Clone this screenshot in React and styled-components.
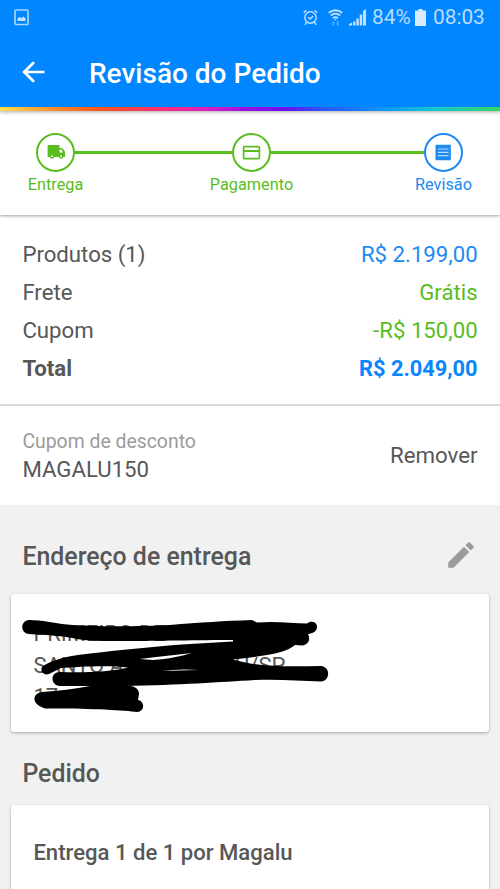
import React from "react";
import styled, { createGlobalStyle } from "styled-components";

const BLUE = "#0a85fc";
const GREEN = "#5abd1e";
const LINK = "#1d8af2";
const TEXT = "#575757";

const GlobalStyle = createGlobalStyle`
  * { box-sizing: border-box; }
  html, body { margin: 0; padding: 0; background: #f1f1f1; }
  body { font-family: Roboto, "Liberation Sans", sans-serif; color: ${TEXT}; overflow: hidden; }
`;

const Screen = styled.main`
  width: 500px;
  height: 889px;
  overflow: hidden;
  display: flex;
  flex-direction: column;
  background: #f1f1f1;
`;

const Header = styled.header`
  flex: none;
  height: 111px;
  display: flex;
  flex-direction: column;
  background: #0086ff;
  color: #fff;
  position: relative;
  z-index: 2;
  box-shadow: 0 1px 4px rgba(0, 0, 0, 0.35);
`;

const StatusBar = styled.div`
  height: 34px;
  display: flex;
  align-items: center;
  padding: 0 14px;
  color: #b9dcff;
  font-size: 20.8px;
  line-height: 34px;
`;

const StatusIcon = styled.svg`
  flex: none;
  display: block;
  width: ${(p) => p.$w}px;
  height: ${(p) => p.$h}px;
  margin-left: ${(p) => p.$gap || 0}px;
`;

const StatusText = styled.span`
  margin-left: ${(p) => p.$gap}px;
  width: ${(p) => p.$w}px;
  white-space: nowrap;
`;

const Spacer = styled.div`
  flex: 1;
`;

const TitleBar = styled.div`
  height: 73px;
  display: flex;
  align-items: center;
  padding: 6px 0 0 22px;
`;

const BackIcon = styled.svg`
  width: 23px;
  height: 22px;
  display: block;
  margin-top: -3px;
`;

const Title = styled.h1`
  margin: 0 0 0 44px;
  font-size: 28px;
  font-weight: 500;
  line-height: 32px;
`;

const Rainbow = styled.div`
  height: 4px;
  background: linear-gradient(90deg, #ffe14d 0%, #fb9130 10%, #f8541c 20%, #fb2a7c 33%, #e01fc0 41%, #9a10e0 49%, #6a10f0 57%, #2a58f8 65%, #0b9cf5 78%, #15c8cc 87%, #35d860 100%);
`;

const Stepper = styled.nav`
  flex: none;
  height: 104px;
  background: #fff;
  padding: 22px 0 0 36px;
  display: flex;
  position: relative;
  z-index: 1;
  box-shadow: 0 1px 3px rgba(0, 0, 0, 0.38);
`;

const Step = styled.div`
  width: 39px;
  flex: none;
  display: flex;
  flex-direction: column;
  align-items: center;
  color: ${(p) => (p.$current ? LINK : GREEN)};
`;

const StepCircle = styled.div`
  width: 39px;
  height: 39px;
  border: 2px solid currentColor;
  border-radius: 50%;
  display: flex;
  align-items: center;
  justify-content: center;
  svg { display: block; width: 19px; height: 19px; }
`;

const StepLabel = styled.span`
  margin-top: 3px;
  font-size: 16.3px;
  line-height: 20px;
  white-space: nowrap;
`;

const Connector = styled.div`
  width: ${(p) => p.$w}px;
  height: 3px;
  margin-top: 18px;
  background: ${GREEN};
`;

const Summary = styled.section`
  flex: none;
  height: 191px;
  padding: 19.5px 22.4px 0;
  background: #fff;
  border-bottom: 2px solid #d9d9d9;
`;

const SummaryRow = styled.div`
  height: 38.2px;
  display: flex;
  justify-content: space-between;
  align-items: center;
  font-size: 22.2px;
  font-weight: ${(p) => (p.$total ? 700 : 400)};
`;

const Amount = styled.span`
  color: ${(p) => p.$color};
  font-size: ${(p) => (p.$total ? 21.8 : 22.2)}px;
`;

const Coupon = styled.section`
  flex: none;
  height: 99px;
  padding: 0 22.4px 1px;
  display: flex;
  justify-content: space-between;
  align-items: center;
  background: #fff;
`;

const CouponInfo = styled.div`
  display: flex;
  flex-direction: column;
`;

const CouponLabel = styled.span`
  color: #9b9b9b;
  font-size: 19.4px;
  line-height: 27px;
`;

const CouponCode = styled.span`
  font-size: 22.2px;
  line-height: 28px;
`;

const RemoveButton = styled.button`
  border: 0;
  padding: 0;
  background: none;
  font: inherit;
  font-size: 22.3px;
  color: ${TEXT};
`;

const SectionHeader = styled.div`
  flex: none;
  height: ${(p) => p.$h}px;
  padding: ${(p) => p.$top}px 22px 0 22.4px;
  display: flex;
  justify-content: space-between;
`;

const SectionTitle = styled.h2`
  margin: 0;
  font-size: 24.9px;
  line-height: 30px;
  font-weight: 500;
`;

const PencilIcon = styled.svg`
  width: 34px;
  height: 34px;
  margin: -4px 0 0 0;
  fill: #9b9b9b;
`;

const Card = styled.article`
  flex: none;
  height: ${(p) => p.$h}px;
  margin: 0 11px;
  padding: 0 22.4px;
  background: #fff;
  border-radius: 3px;
  box-shadow: 0 1px 3px rgba(0, 0, 0, 0.32);
  position: relative;
`;

const Address = styled.address`
  padding-top: 24px;
  font-style: normal;
  font-size: 22px;
  line-height: 31.5px;
  color: #555;
  white-space: pre;
`;

const AddressLine = styled.div`
  display: flex;
  justify-content: space-between;
  width: ${(p) => p.$w}px;
`;

const Scribble = styled.svg`
  position: absolute;
  left: 0;
  top: 0;
  width: 478px;
  height: 138px;
  fill: #000;
`;

const DeliveryTitle = styled.h3`
  margin: 0;
  padding-top: 32.500px;
  font-size: 22.1px;
  line-height: 28px;
  font-weight: 500;
`;

export default function App() {
  return (
    <>
      <GlobalStyle />
      <Screen>
        <Header>
          <StatusBar>
            <StatusIcon $w={15} $h={17} viewBox="0 0 15 17">
              <rect x="1" y="1" width="13" height="14.5" rx="1" fill="none" stroke="#a9d5ff" strokeWidth="1.7" />
              <path d="M3.5 12V9.5l2-1.5 2 1 2-1.5 2 2V12z" fill="#c3e1ff" />
            </StatusIcon>
            <Spacer />
            <StatusIcon $w={15} $h={17} viewBox="0 0 15 17" fill="none" stroke="#c3e1ff" strokeWidth="1.4">
              <circle cx="7.5" cy="8.5" r="5.7" />
              <path d="M.7 3.8 3.5 1.2M14.3 3.8 11.5 1.2M3.5 13.2 2 16M11.5 13.2 13 16M5 8.3l2 1.8 3.2-3.2" />
            </StatusIcon>
            <StatusIcon $w={15} $h={17} $gap={10} viewBox="0 0 15 17" fill="none" stroke="#c3e1ff" strokeWidth="1.8">
              <path d="M.7 3.8Q7.5-1.3 14.3 3.8M2.8 6.5Q7.5 2.9 12.2 6.5M5 9Q7.5 7.2 10 9" />
              <path d="m6 9.8 1.5 1.6L9 9.8z" fill="#c3e1ff" stroke="none" />
              <path d="M5.3 12.5v4M9.7 12.5v4" stroke="#5fb1ff" />
            </StatusIcon>
            <StatusIcon $w={17} $h={17} $gap={6} viewBox="0 0 17 17" fill="#c3e1ff">
              <path d="M0 16.5v-1.5l3-1.5v3zM4 12.5h2.4v4H4zM7.3 9.5h2.5v7H7.3zM10.7 5.5h2.5v11h-2.5zM14 2l3-2v16.5h-3z" />
            </StatusIcon>
            <StatusText $gap={6} $w={39}>84%</StatusText>
            <StatusIcon $w={11} $h={17} $gap={4} viewBox="0 0 11 17" fill="#d8ecff">
              <path d="M3.5 0h4v1.5H11V17H0V1.5h3.5z" />
            </StatusIcon>
            <StatusText $gap={7} $w={53}>08:03</StatusText>
          </StatusBar>
          <TitleBar>
            <BackIcon viewBox="0 0 23 22" fill="none" stroke="#fff" strokeWidth="2.7">
              <path d="M22.5 11H2.5M12 1.2 2.2 11l9.8 9.8" />
            </BackIcon>
            <Title>Revisão do Pedido</Title>
          </TitleBar>
          <Rainbow />
        </Header>

        <Stepper>
          <Step>
            <StepCircle>
              <svg viewBox="0 0 19 19" fill="currentColor">
                <path fillRule="evenodd" d="M2.600 2H12.500q1 0 1 1V5H15q1.500 0 2.300 1.300L19.500 9.500V14H17.600a2.500 2.500 0 0 1-4.800 0H8.600a2.500 2.500 0 0 1-4.800 0H1.600V3q0-1 1-1zM13.500 6.500V9.500H17L15.700 6.900Q15.500 6.500 15 6.500zM6.200 12.300a1 1 0 1 0 .01 2 1 1 0 0 0-.01-2zM15.200 12.300a1 1 0 1 0 .01 2 1 1 0 0 0-.01-2z" />
              </svg>
            </StepCircle>
            <StepLabel>Entrega</StepLabel>
          </Step>
          <Connector $w={157} />
          <Step>
            <StepCircle>
              <svg viewBox="0 0 19 19" fill="none" stroke="currentColor">
                <rect x="1.6" y="3.600" width="15.8" height="12" rx="1" strokeWidth="1.7" />
                <path d="M1.600 8H17.400" strokeWidth="2" />
              </svg>
            </StepCircle>
            <StepLabel>Pagamento</StepLabel>
          </Step>
          <Connector $w={153} />
          <Step $current>
            <StepCircle>
              <svg viewBox="0 0 19 19">
                <path fill="currentColor" d="M1.500 1.500l1 .5 1.300-.6 1.300.6 1.300-.6 1.300.6 1.300-.6 1.300.6 1.300-.6 1.300.6 1.300-.6 1.300.6 1.300-.5v16l-1.300-.5-1.300.6-1.300-.6-1.300.6-1.300-.6-1.300.6-1.300-.6-1.300.6-1.300-.6-1.300.6-1.300-.6-1 .4z" />
                <path fill="none" stroke="#b9dcff" strokeWidth="1.2" d="M4 6h10.500M4 9.300h10.500M4 12.600h10.500" />
              </svg>
            </StepCircle>
            <StepLabel>Revisão</StepLabel>
          </Step>
        </Stepper>

        <Summary>
          <SummaryRow><span>Produtos (1)</span><Amount $color={LINK}>R$ 2.199,00</Amount></SummaryRow>
          <SummaryRow><span>Frete</span><Amount $color={GREEN}>Grátis</Amount></SummaryRow>
          <SummaryRow><span>Cupom</span><Amount $color={GREEN}>-R$ 150,00</Amount></SummaryRow>
          <SummaryRow $total><span>Total</span><Amount $total $color={BLUE}>R$ 2.049,00</Amount></SummaryRow>
        </Summary>

        <Coupon>
          <CouponInfo>
            <CouponLabel>Cupom de desconto</CouponLabel>
            <CouponCode>MAGALU150</CouponCode>
          </CouponInfo>
          <RemoveButton>Remover</RemoveButton>
        </Coupon>

        <SectionHeader $h={89} $top={37}>
          <SectionTitle>Endereço de entrega</SectionTitle>
          <PencilIcon viewBox="0 0 24 24">
            <path d="M3 17.250V21h3.750L17.810 9.940l-3.750-3.750L3 17.250zM20.710 7.040c.39-.39.39-1.020 0-1.410l-2.340-2.340c-.39-.39-1.020-.39-1.410 0l-1.830 1.830 3.750 3.750 1.830-1.830z" />
          </PencilIcon>
        </SectionHeader>

        <Card $h={138}>
          <Address>
            <AddressLine>PRIMEIRO DE</AddressLine>
            <AddressLine $w={252}><span>SANTO A</span><span>U/SP</span></AddressLine>
            <AddressLine>17</AddressLine>
          </Address>
          <Scribble viewBox="11 594 478 138">
            <path d="M29 620C42 620 54 623 67 624.5C95 627 140 626.5 170 625C200 622.5 225 621 252 620L257 622.5C275 621 292 623 307 623.5C310 621 316 621 317 626C317.5 631 313 633.5 308 634C311 640 308 645 302 645.5L295 645C288 651 278 653 267 655C255 657 244 658 233 659.5C245 663 258 665 270 665.5C288 667 305 666 321 666C331 667 330 681 321 681.5C300 681 280 679 255 680C220 682 180 685 125 686C133 685 139 688 139 694L138 700C145 701 145 712 137 712C125 710 80 708 45 708.5C32 705 31 694 42 692C58 691 75 689 90 686L60 686C50 685 50 672 60 672C83 673 110 672 128 667.5C108 665 78 667 61 668L49 674C43 676 39 670 43 666C55 658 75 655 90 653.5C120 650 160 646 190 644L233 641.5V640C200 640 155 641 125 641C108 641 95 641 83 640C65 636 48 635 29 634C20 633 20 621 29 620Z" />
            <g fill="#fff">
              <path d="M140 659C155 657 175 655 192 653C182 656 168 659 153 660Z" />
              <path d="M162 671Q178 668.500 199 670Q178 670.500 162 671Z" />
            </g>
          </Scribble>
        </Card>

        <SectionHeader $h={73} $top={27}>
          <SectionTitle>Pedido</SectionTitle>
        </SectionHeader>

        <Card $h={120}>
          <DeliveryTitle>Entrega 1 de 1 por Magalu</DeliveryTitle>
        </Card>
      </Screen>
    </>
  );
}
